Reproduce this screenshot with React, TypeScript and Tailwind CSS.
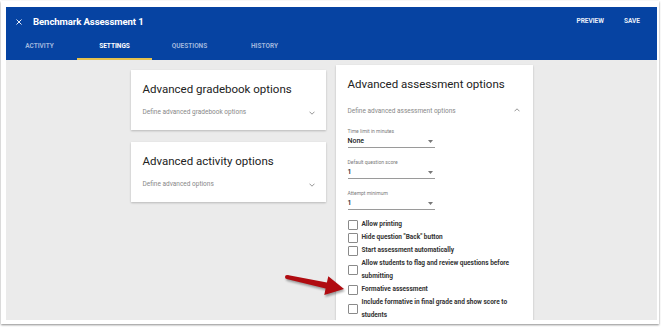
import React from "react";

function ChevronDown() {
  return (
    <svg width="6" height="4" viewBox="0 0 6 4" className="block">
      <path d="M0.5 0.7 L3 3.2 L5.5 0.7" fill="none" stroke="#8a8a8a" strokeWidth="0.9" />
    </svg>
  );
}

function ChevronUp() {
  return (
    <svg width="6" height="4" viewBox="0 0 6 4" className="block">
      <path d="M0.5 3.3 L3 0.8 L5.5 3.3" fill="none" stroke="#8a8a8a" strokeWidth="0.9" />
    </svg>
  );
}

function Field({ label, value }: { label: string; value: string }) {
  return (
    <div className="w-[87px] flex flex-col">
      <div className="text-[5px] leading-[7px] text-[#7a7a7a]">{label}</div>
      <div className="mt-[2px] flex items-center justify-between pb-[1px] border-b border-[#9a9a9a] pr-[2px]">
        <span className="text-[7px] leading-[9px] font-medium text-[#222]">{value}</span>
        <svg width="5" height="3" viewBox="0 0 5 3" className="block">
          <path d="M0 0 L5 0 L2.5 3 Z" fill="#777" />
        </svg>
      </div>
    </div>
  );
}

function Check({ children }: { children: React.ReactNode }) {
  return (
    <div className="flex items-center gap-[4px]">
      <div className="w-[10px] h-[10px] border border-[#8a8a8a] rounded-[1px] bg-white shrink-0" />
      <div className="text-[6.5px] leading-[13px] font-bold text-[#333]">{children}</div>
    </div>
  );
}

function SmallCard({ title, sub }: { title: string; sub: string }) {
  return (
    <div className="h-[60px] bg-white shadow-[0_1px_2px_rgba(0,0,0,0.22)] pl-[12px] pr-[11px] pt-[12px]">
      <div className="text-[11.5px] leading-[14px] text-[#222]">{title}</div>
      <div className="mt-[12px] flex items-center justify-between">
        <span className="text-[6.5px] leading-[8px] text-[#888]">{sub}</span>
        <div className="mt-[2px]">
          <ChevronDown />
        </div>
      </div>
    </div>
  );
}

export default function App() {
  const tabs = ["ACTIVITY", "SETTINGS", "QUESTIONS", "HISTORY"];
  return (
    <div className="relative w-[664px] h-[328px] bg-white pt-[1px] pl-[1px] overflow-hidden" style={{ fontFamily: "Roboto, 'Liberation Sans', sans-serif" }}>
      <div className="w-[658px] h-[323px] bg-white shadow-[0_1px_2px_rgba(0,0,0,0.45)] pl-[5px] pt-[6px]">
        <div className="w-[651px] h-[313px] bg-[#ebebeb] overflow-hidden flex flex-col">
          {/* header */}
          <div className="h-[53px] bg-[#0643a2] shrink-0 flex flex-col">
            <div className="h-[30px] flex items-center pl-[10px] pr-[17px]">
              <svg width="6" height="6" viewBox="0 0 6 6" className="block">
                <path d="M0.5 0.5 L5.5 5.5 M5.5 0.5 L0.5 5.5" stroke="#e8eef8" strokeWidth="1" />
              </svg>
              <span className="ml-[11px] text-[9.6px] font-bold text-white tracking-[-0.1px]">Benchmark Assessment 1</span>
              <div className="ml-auto flex items-center gap-[20px] text-[6.5px] font-bold text-[#e8eef8]">
                <span>PREVIEW</span>
                <span>SAVE</span>
              </div>
            </div>
            <div className="h-[23px] flex ml-[-4px]">
              {tabs.map((t) => (
                <div
                  key={t}
                  className={
                    t === "SETTINGS"
                      ? "w-[75px] h-[23px] flex items-center justify-center pb-[1px] border-b-2 border-[#e6c24e] text-[6.5px] font-bold text-white"
                      : "w-[75px] h-[23px] flex items-center justify-center pb-[1px] border-b-2 border-transparent text-[6.5px] font-bold text-[#9fb6dd]"
                  }
                >
                  {t}
                </div>
              ))}
            </div>
          </div>
          {/* content */}
          <div className="flex-1 flex justify-center gap-[10px] pt-[5px] bg-[linear-gradient(to_bottom,#ebebeb_85%,#efefef)]">
            <div className="w-[195px] mt-[5px] flex flex-col gap-[12px]">
              <SmallCard title="Advanced gradebook options" sub="Define advanced gradebook options" />
              <SmallCard title="Advanced activity options" sub="Define advanced options" />
            </div>
            <div className="w-[197px] h-[300px] bg-white shadow-[0_1px_2px_rgba(0,0,0,0.22)] pl-[12px] pr-[12px] pt-[12px]">
              <div className="text-[11.5px] leading-[14px] text-[#222]">Advanced assessment options</div>
              <div className="mt-[16px] flex items-center justify-between">
                <span className="text-[6.5px] leading-[8px] text-[#888]">Define advanced assessment options</span>
                <div className="mt-[-3px] mr-[1px]">
                  <ChevronUp />
                </div>
              </div>
              <div className="mt-[13px] flex flex-col gap-[11px]">
                <Field label="Time limit in minutes" value="None" />
                <Field label="Default question score" value="1" />
                <Field label="Attempt minimum" value="1" />
              </div>
              <div className="mt-[8px] flex flex-col">
                <Check>Allow printing</Check>
                <Check>Hide question "Back" button</Check>
                <Check>Start assessment automatically</Check>
                <Check>
                  Allow students to flag and review questions before
                  <br />
                  submitting
                </Check>
                <Check>Formative assessment</Check>
                <Check>
                  Include formative in final grade and show score to
                  <br />
                  students
                </Check>
              </div>
            </div>
          </div>
        </div>
      </div>
      {/* annotation arrow */}
      <svg
        width="664"
        height="328"
        viewBox="0 0 664 328"
        className="absolute left-0 top-0 pointer-events-none drop-shadow-[1px_2px_1px_rgba(0,0,0,0.35)]"
      >
        <polygon
          points="287.4,275 326.9,282.6 328.3,276.2 344,289 324.3,295 325.6,288.6 286.6,279"
          fill="#b00b10"
        />
        <circle cx="287" cy="277" r="2" fill="#b00b10" />
      </svg>
    </div>
  );
}
